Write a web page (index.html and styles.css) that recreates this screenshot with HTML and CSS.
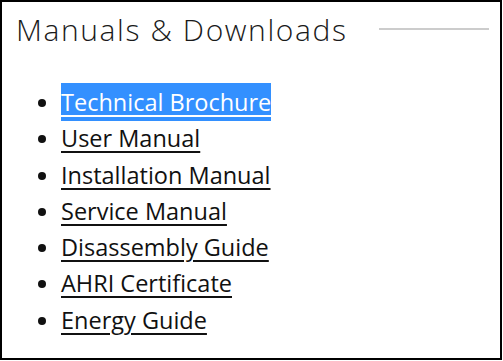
FILE: index.html
```html
<!DOCTYPE html>
<html lang="en">
<head>
  <meta charset="UTF-8" />
  <title>Manuals &amp; Downloads</title>
  <link rel="stylesheet" href="styles.css">
</head>
<body>
  <div class="downloads">
    <div class="downloads-header">
      <h2>Manuals &amp; Downloads</h2>
      <span class="rule"></span>
    </div>

    <ul class="doc-list">
      <li><a href="#" class="selected">Technical Brochure</a></li>
      <li><a href="#">User Manual</a></li>
      <li><a href="#">Installation Manual</a></li>
      <li><a href="#">Service Manual</a></li>
      <li><a href="#">Disassembly Guide</a></li>
      <li><a href="#">AHRI Certificate</a></li>
      <li><a href="#">Energy Guide</a></li>
    </ul>
  </div>
</body>
</html>
```

FILE: styles.css
```css
body {
  margin: 0;
  padding: 0;
  background: #fff;
  color: #111;
}

.downloads {
  box-sizing: border-box;
  width: 502px;
  height: 360px;
  border: 2px solid #000;
  padding: 0 11px 0 14px;
}

.downloads-header {
  display: flex;
  align-items: center;
  gap: 31px;
  height: 54px;
}

.downloads-header h2 {
  margin: 0;
  font-family: 'Open Sans', sans-serif;
  font-weight: 300;
  font-size: 30px;
  letter-spacing: 1.6px;
  color: #1a1a1a;
  white-space: nowrap;
}

.rule {
  flex: 1;
  height: 2px;
  background: #ccc;
}

.doc-list {
  margin: 28px 0 0;
  padding-left: 45px;
  font-family: 'Open Sans', sans-serif;
  font-size: 23.5px;
  line-height: 36.3px;
}

.doc-list li::marker {
  font-size: 22px;
}

.doc-list a {
  color: #111;
  text-decoration: underline;
  text-decoration-thickness: 2px;
  text-underline-offset: 4px;
}

.doc-list a.selected {
  background: #3390ff;
  color: #fff;
  padding: 3px 0 3px;
}
```
